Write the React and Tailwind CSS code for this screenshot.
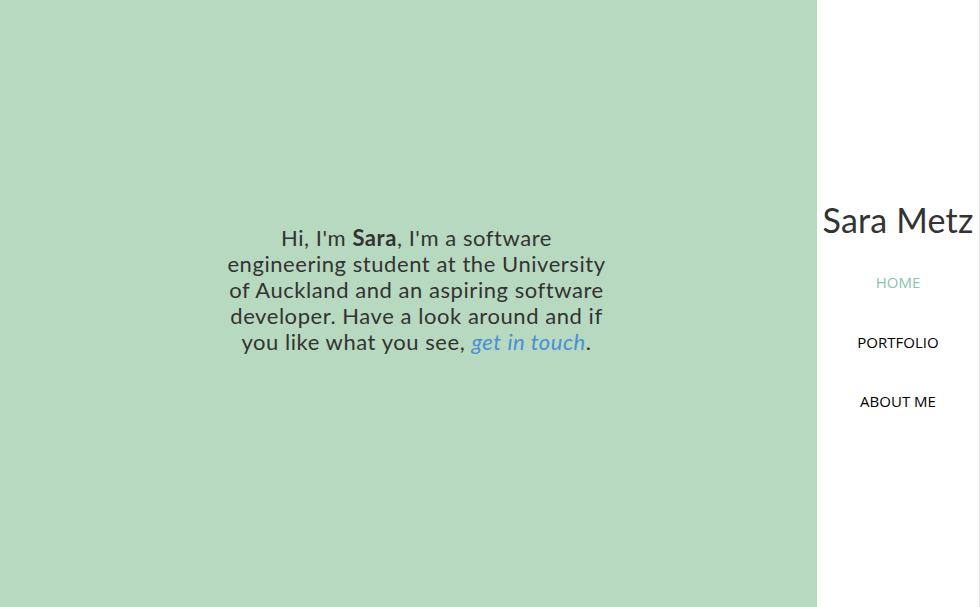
import React from 'react';

const navItems = [
    { label: 'HOME', active: true },
    { label: 'PORTFOLIO', active: false },
    { label: 'ABOUT ME', active: false },
];

const App = () => {
    return (
        <div className="flex h-[607px] w-full overflow-hidden bg-white">
            {/* Intro panel */}
            <main className="flex-1 bg-[#b7d9c0] flex items-center justify-center pl-4 pb-7">
                <p className="whitespace-nowrap text-center text-[22px] leading-[26px] tracking-[0.55px] text-[#333333] font-['Lato',sans-serif]">
                    Hi, I'm <strong className="font-bold">Sara</strong>, I'm a software<br />
                    engineering student at the University<br />
                    of Auckland and an aspiring software<br />
                    developer. Have a look around and if<br />
                    you like what you see, <a href="#" className="italic text-[#4a8ed6]">get in touch</a>.
                </p>
            </main>

            {/* Sidebar */}
            <aside className="w-[163px] flex-shrink-0 border-r border-[#e6e6e6] flex flex-col items-center pt-[200px]">
                <h1 className="text-[34px] leading-[40px] tracking-[0.2px] text-[#333333] font-['Lato',sans-serif] whitespace-nowrap">Sara Metz</h1>
                <nav className="flex flex-col items-center mt-[32px] gap-[39.5px]">
                    {navItems.map((item) => (
                        <a
                            key={item.label}
                            href="#"
                            className={`text-[15px] leading-[20px] font-['Open_Sans',sans-serif] ${item.active ? 'text-[#8cc2b1]' : 'text-black'}`}
                        >
                            {item.label}
                        </a>
                    ))}
                </nav>
            </aside>
        </div>
    );
};

export default App;
